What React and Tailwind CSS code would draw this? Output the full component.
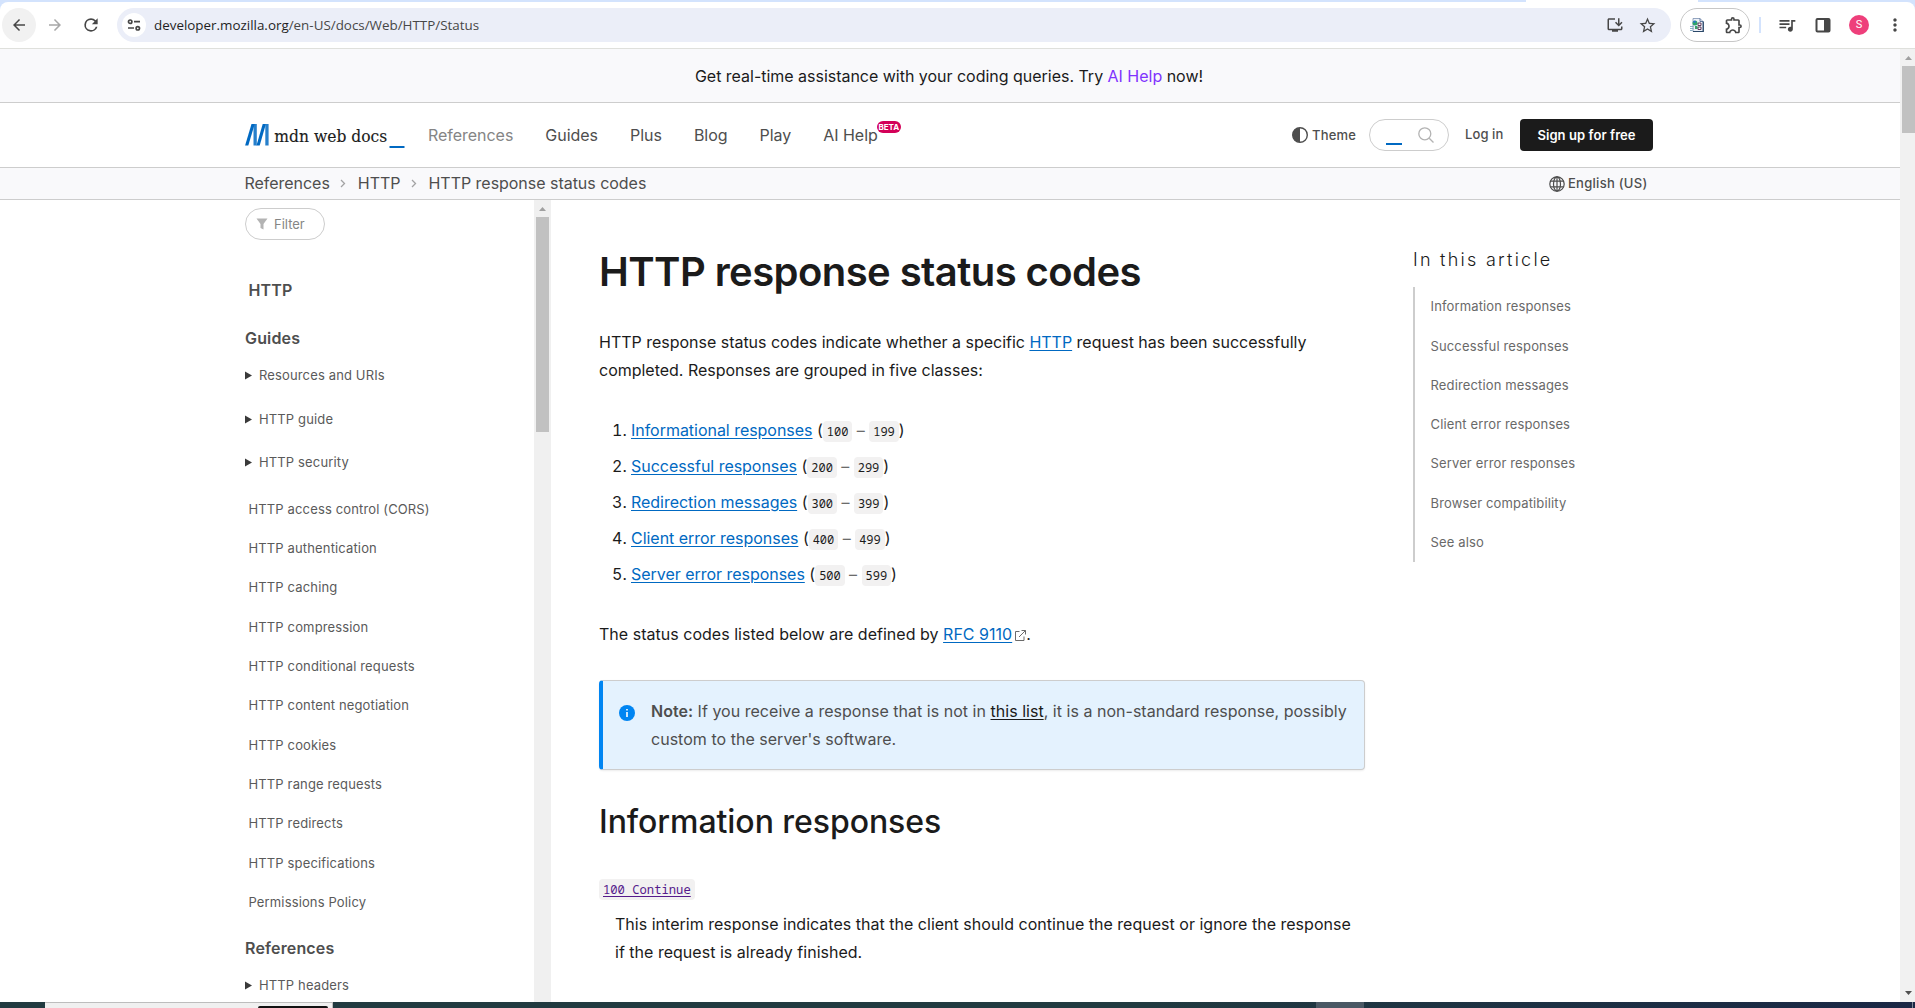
import React from "react";
import { MdInstallDesktop, MdStarBorder, MdOutlineExtension, MdQueueMusic, MdMoreVert } from "react-icons/md";

const guides = [
  "HTTP access control (CORS)",
  "HTTP authentication",
  "HTTP caching",
  "HTTP compression",
  "HTTP conditional requests",
  "HTTP content negotiation",
  "HTTP cookies",
  "HTTP range requests",
  "HTTP redirects",
  "HTTP specifications",
  "Permissions Policy",
];

const classes = [
  ["Informational responses", "100", "199"],
  ["Successful responses", "200", "299"],
  ["Redirection messages", "300", "399"],
  ["Client error responses", "400", "499"],
  ["Server error responses", "500", "599"],
];

const toc = [
  "Information responses",
  "Successful responses",
  "Redirection messages",
  "Client error responses",
  "Server error responses",
  "Browser compatibility",
  "See also",
];

function Code({ children }) {
  return (
    <code className="rounded bg-[#f2f1f1] px-1 py-0.5 font-['Noto_Sans_Mono','DejaVu_Sans_Mono',monospace] text-[12px] tracking-[-0.050px] text-[#1b1b1b]">
      {children}
    </code>
  );
}

function Link({ children }) {
  return <a className="text-[#0069c2] underline underline-offset-2">{children}</a>;
}

function BrowserBar() {
  return (
    <div className="flex h-[49px] shrink-0 flex-col border-b border-[#dfe0dc] bg-[#d3e3fd]">
      <div className="flex h-0.5 shrink-0">
        <div className="ml-[1526px] h-0.5 w-[172px] bg-white" />
      </div>
      <div className="flex flex-1 items-center rounded-t-lg bg-white text-[#474747]">
        <div className="ml-0.5 flex size-[34px] items-center justify-center rounded-full bg-[#f1f1f1]">
          <svg className="size-[18px]" viewBox="0 0 24 24" fill="currentColor"><path d="M20 11H7.830l5.590-5.590L12 4l-8 8 8 8 1.410-1.410L7.830 13H20z" /></svg>
        </div>
        <svg className="ml-[10px] size-[18px] text-[#a8a8a8]" viewBox="0 0 24 24" fill="currentColor"><path d="M4 13h12.170l-5.590 5.590L12 20l8-8-8-8-1.410 1.410L16.170 11H4z" /></svg>
        <svg className="ml-[17px] size-5" viewBox="0 0 24 24" fill="currentColor"><path d="M17.650 6.350A7.960 7.960 0 0 0 12 4a8 8 0 1 0 7.730 10h-2.080A6 6 0 1 1 12 6c1.660 0 3.140.690 4.220 1.780L13 11h7V4z" /></svg>
        <div className="ml-4 flex h-[34px] w-[1554px] items-center rounded-full bg-[#ebeef8]">
          <div className="ml-[5px] flex size-6 items-center justify-center rounded-full bg-white">
            <svg className="size-4" viewBox="0 0 16 16" fill="none" stroke="currentColor" strokeWidth="1.700"><circle cx="4.200" cy="4.700" r="1.700" /><path d="M8 4.700h6M2 11h6" /><circle cx="11.800" cy="11.300" r="1.700" /></svg>
          </div>
          <span className="ml-2 flex-1 font-['Open_Sans','Noto_Sans',sans-serif] text-[13.400px] text-[#474747]">
            <span className="text-[#1f1f1f]">developer.mozilla.org</span>/en-US/docs/Web/HTTP/Status
          </span>
          <MdInstallDesktop className="size-[18px]" />
          <MdStarBorder className="mr-[14px] ml-[14px] size-[19px]" />
        </div>
        <div className="ml-[9px] flex h-[34px] w-[70px] items-center rounded-full border border-[#c7c7c7]">
          <svg className="mr-0.5 ml-[9px] size-[14px]" viewBox="0 0 14 14">
            <path d="M3 .5h7l3 3v10H3z" fill="#eef2fa" stroke="#7b8fae" strokeWidth=".8" />
            <path d="M10 .5v3h3" fill="none" stroke="#3c5a88" strokeWidth=".8" />
            <path d="M13.300 3.500v10H3" stroke="#2b4868" fill="none" strokeWidth="1.200" />
            <circle cx="5" cy="5" r="2.500" fill="#2fa36b" />
            <path d="M3 4a2.500 2.500 0 0 1 3-1l-1 2z" fill="#2a6fd6" />
            <path d="M5 8h2.500v3H5z" fill="#3aa06b" />
            <path d="M8 5h3v2.500H8zM8 9h3v2.500H8z" fill="#fff" stroke="#502848" strokeWidth=".9" />
            <path d="M0 8.500h3.500M0 10.500h3.500M0 12.500h2.500" stroke="#6c9ab8" strokeWidth=".8" />
          </svg>
          <MdOutlineExtension className="ml-[18px] size-5" />
        </div>
        <div className="ml-[9px] h-4 w-0.5 bg-[#d3e3fd]" />
        <MdQueueMusic className="ml-[16px] size-5" />
        <svg className="ml-[18px] size-4" viewBox="0 0 16 16"><rect x="1.500" y="2" width="13" height="12.500" rx="1" fill="none" stroke="currentColor" strokeWidth="2" /><path d="M9 2h5.500v12.500H9z" fill="currentColor" /></svg>
        <div className="ml-[18px] flex size-5 items-center justify-center rounded-full bg-[#ee3f7b] font-['Roboto',sans-serif] text-[11px] text-white">S</div>
        <MdMoreVert className="ml-[16px] size-5" />
      </div>
    </div>
  );
}

function Header() {
  return (
    <header className="flex h-[65px] shrink-0 items-center border-b border-[#cdcdcd] pl-[245px] text-[#4e4e4e]">
      <svg className="h-[26px] w-[160px] shrink-0" viewBox="0 0 160 26">
        <g fill="#0069c2">
          <path d="M6.500 2h3.200L3.300 23.500H.100z" /><path d="M8.500 2h3.300v21.500H8.500z" opacity=".85" />
          <path d="M17.700 2h3.200l-6.200 21.500h-3.200z" /><path d="M20.300 2h3.300v21.500h-3.300z" opacity=".85" />
          <path d="M144.500 24h15v2h-15z" />
        </g>
        <text x="29.300" y="19.500" textLength="113" lengthAdjust="spacingAndGlyphs" fontFamily="'DejaVu Serif','Liberation Serif',serif" fontSize="17.500" fill="#1b1b1b" stroke="#1b1b1b" strokeWidth="0.150">mdn web docs</text>
      </svg>
      <nav className="ml-[23px] flex flex-1 gap-8 text-[16px] tracking-[-0.030px]">
        <span className="text-[#858585]">References</span>
        <span>Guides</span>
        <span>Plus</span>
        <span>Blog</span>
        <span>Play</span>
        <span className="relative">
          AI Help
          <span className="absolute top-[-2px] left-[calc(100%-1px)] flex h-3 w-6 items-center justify-center rounded-full bg-[#d30058] text-[8px] leading-none font-bold text-white">BETA</span>
        </span>
      </nav>
      <svg className="size-4" viewBox="0 0 16 16"><circle cx="8" cy="8" r="7.300" fill="none" stroke="currentColor" strokeWidth="1.400" /><path d="M8 .7a7.300 7.300 0 0 0 0 14.600z" fill="currentColor" /></svg>
      <span className="mt-0.5 ml-1 w-[45px] text-[13px] font-medium tracking-[0.200px]">Theme</span>
      <div className="ml-3 flex h-8 w-20 items-center rounded-full border border-[#cdcdcd]">
        <div className="mt-[18px] ml-4 h-0.5 w-4 bg-[#0069c2]" />
        <svg className="ml-4 size-4 text-[#b3b3b3]" viewBox="0 0 16 16" fill="none" stroke="currentColor" strokeWidth="1.300"><circle cx="6.800" cy="6.800" r="6" /><path d="M11.200 11.200l4.300 4.300" /></svg>
      </div>
      <span className="ml-4 w-[39px] text-[13px] font-medium tracking-[0.100px] whitespace-nowrap">Log in</span>
      <div className="mr-[247px] ml-4 flex h-8 w-[133px] items-center justify-center rounded bg-[#1b1b1b] pt-0.5 text-[13px] font-semibold tracking-[0.080px] text-white">Sign up for free</div>
    </header>
  );
}

function Chevron() {
  return <svg className="mx-[8.500px] mt-px size-[11px] text-[#a3a3a3]" viewBox="0 0 11 11" fill="none" stroke="currentColor" strokeWidth="1.300"><path d="M3 2l3.500 3.500L3 9" /></svg>;
}

function Breadcrumbs() {
  return (
    <div className="flex h-8 shrink-0 items-center border-b border-[#cdcdcd] bg-[#f9f9fb] pb-px pl-[244.500px] text-[16px] tracking-[-0.030px] text-[#4e4e4e]">
      <span>References</span><Chevron /><span>HTTP</span><Chevron /><span className="flex-1">HTTP response status codes</span>
      <svg className="mt-px size-4" viewBox="0 0 16 16" fill="none" stroke="currentColor" strokeWidth="1.200"><circle cx="8" cy="8" r="7.200" /><ellipse cx="8" cy="8" rx="3.500" ry="7.200" /><path d="M8 .8v14.400M1.500 5.200h13M1.500 10.800h13" /></svg>
      <span className="mt-px mr-[252px] ml-[3px] w-20 text-[13px] font-medium tracking-[0.280px] whitespace-nowrap">English (US)</span>
    </div>
  );
}

function Summary({ children }) {
  return (
    <div className="flex h-[43.500px] items-center text-[13px] tracking-[0.140px]">
      <svg className="mr-[7px] h-[9px] w-[7px]" viewBox="0 0 7 9" fill="#3a3a3a"><path d="M0 .5v8l7-4z" /></svg>
      {children}
    </div>
  );
}

function Sidebar() {
  return (
    <aside className="flex w-[289px] shrink-0 flex-col overflow-hidden pt-2 text-[#5a5a5a]">
      <div className="flex h-8 w-20 shrink-0 items-center rounded-full border border-[#cdcdcd] text-[13px] text-[#858585]">
        <svg className="ml-[10px] size-3 text-[#b3b3b3]" viewBox="0 0 12 12" fill="currentColor"><path d="M.5.500h11L7.500 6v5.500l-3-1.500V6z" /></svg>
        <span className="mt-0.5 ml-[6px]">Filter</span>
      </div>
      <div className="mt-[38px] ml-[3.500px] h-6 shrink-0 text-[16px] font-semibold tracking-[0.120px] text-[#4e4e4e]">HTTP</div>
      <div className="mt-6 h-6 shrink-0 text-[16px] font-semibold tracking-[0.160px] text-[#4e4e4e]">Guides</div>
      <div className="mt-[4px] shrink-0">
        <Summary>Resources and URIs</Summary>
        <Summary>HTTP guide</Summary>
        <Summary>HTTP security</Summary>
      </div>
      <ul className="mt-[5.500px] ml-[3.500px] shrink-0">
        {guides.map((g) => <li key={g} className="flex h-[39.300px] items-center text-[13px] tracking-[0.140px]">{g}</li>)}
      </ul>
      <div className="mt-[13.500px] h-6 shrink-0 text-[16px] font-semibold tracking-[0.160px] text-[#4e4e4e]">References</div>
      <div className="mt-[4px] shrink-0"><Summary>HTTP headers</Summary></div>
    </aside>
  );
}

function Article() {
  return (
    <main className="ml-12 w-[766px] shrink-0 text-[16px] leading-7 text-[#1b1b1b]">
      <h1 className="mt-12 h-12 text-[40px] leading-[48px] font-[560] tracking-[-0.570px] whitespace-nowrap">HTTP response status codes</h1>
      <p className="mt-8 tracking-[-0.015px]">HTTP response status codes indicate whether a specific <Link>HTTP</Link> request has been successfully<br />completed. Responses are grouped in five classes:</p>
      <ol className="mt-8 list-decimal pl-8">
        {classes.map(([name, from, to]) => (
          <li key={from} className="h-9 leading-7"><span className="tracking-[-0.030px]"><Link>{name}</Link></span> (<Code>{from}</Code> <span className="text-[#6b6b6b]">–</span> <Code>{to}</Code>)</li>
        ))}
      </ol>
      <p className="mt-[24px] tracking-[0.020px]">
        The status codes listed below are defined by <Link>RFC 9110</Link>
        <svg className="ml-[3px] inline size-[11px] align-[-1px] text-[#6b6b6b]" viewBox="0 0 11 11" fill="none" stroke="currentColor"><path d="M4.500 1.500h-4v9h8.500V6.500M6.500.5h4v4M10.500.5L4 7" /></svg>.
      </p>
      <div className="mt-[32px] flex h-[90px] rounded border border-l-4 border-[#cdcdcd] border-l-[#0085f2] bg-[#e4f2fe] pt-[16px] text-[#4e4e4e] shadow-[0_1px_2px_rgba(0,0,0,0.080)]">
        <svg className="mt-2 ml-4 size-4 shrink-0" viewBox="0 0 16 16"><circle cx="8" cy="8" r="8" fill="#0085f2" /><path d="M7.200 4h1.600v1.600H7.200zM7.200 7h1.600v5H7.200z" fill="#fff" /></svg>
        <p className="ml-4 tracking-[0.025px] whitespace-nowrap"><b className="font-semibold">Note:</b> If you receive a response that is not in <a className="text-[#1b1b1b] underline underline-offset-2">this list</a>, it is a non-standard response, possibly<br />custom to the server's software.</p>
      </div>
      <h2 className="mt-8 h-10 text-[32px] leading-10 font-medium tracking-[-0.060px]">Information responses</h2>
      <div className="mt-[32px] h-7 text-[#551a8b]"><code className="rounded bg-[#f2f1f1] px-1 py-0.5 font-['Noto_Sans_Mono','DejaVu_Sans_Mono',monospace] text-[12.200px] underline underline-offset-2">100 Continue</code></div>
      <p className="mt-[8px] ml-4 tracking-[0.015px] whitespace-nowrap">This interim response indicates that the client should continue the request or ignore the response<br />if the request is already finished.</p>
    </main>
  );
}

function Toc() {
  return (
    <aside className="ml-12 shrink-0 pt-12">
      <div className="h-[39px] text-[18px] leading-6 font-light tracking-[2.250px] text-[#1b1b1b]">In this article</div>
      <ul className="h-[275px] border-l-2 border-[#cdcdcd] pt-[0.400px] pl-[15.500px] text-[13px] tracking-[0.140px] text-[#696969]">
        {toc.map((t) => <li key={t} className="flex h-[39.300px] items-center">{t}</li>)}
      </ul>
    </aside>
  );
}

export default function App() {
  return (
    <div className="flex h-[1008px] w-[1915px] flex-col overflow-hidden bg-white font-['Inter',sans-serif]">
      <BrowserBar />
      <div className="flex min-h-0 flex-1">
        <div className="flex w-[1900px] flex-col overflow-hidden">
          <div className="flex h-[54px] shrink-0 items-center justify-center border-b border-[#cdcdcd] bg-[#f9f9fb] pt-px pr-[2px] text-[16px] tracking-[-0.020px] text-[#1b1b1b]">
            <span>Get real-time assistance with your coding queries. Try <span className="text-[#8033fe]">AI Help</span> now!</span>
          </div>
          <Header />
          <Breadcrumbs />
          <div className="flex min-h-0 flex-1 overflow-hidden pl-[245px]">
            <Sidebar />
            <div className="flex w-[17px] shrink-0 flex-col items-center bg-[#f0f0f0]">
              <svg className="mt-[7px] h-1 w-[7px]" viewBox="0 0 7 4" fill="#a0a0a0"><path d="M0 4L3.500 0 7 4z" /></svg>
              <div className="mt-[6px] h-[215px] w-[13px] bg-[#c1c1c1]" />
            </div>
            <Article />
            <Toc />
          </div>
        </div>
        <div className="flex w-[15px] flex-col items-end bg-[#f1f1f1]">
          <svg className="mt-[7px] mr-[3px] h-1 w-[7px]" viewBox="0 0 7 4" fill="#a0a0a0"><path d="M0 4L3.500 0 7 4z" /></svg>
          <div className="mt-[6px] h-[67px] w-[13px] bg-[#c1c1c1]" />
          <svg className="mt-auto mr-[3px] mb-[7px] h-1 w-[7px]" viewBox="0 0 7 4" fill="#505050"><path d="M0 0h7L3.500 4z" /></svg>
        </div>
      </div>
      <div className="flex h-1.5 shrink-0 bg-linear-to-r from-[#213a40] from-60% to-[#1a2745]">
        <div className="ml-[45px] h-full w-[288px] border-t border-r border-[#bdbdbd] bg-[#f0f0f0] pt-[3px] pl-[213px]">
          <div className="h-0.5 w-[70px] rounded-t bg-[#111]" />
        </div>
        <div className="ml-[983px] h-full w-12 bg-[#4a5864]" />
        <div className="mr-0.5 ml-auto h-full w-px bg-[#7d8795]" />
      </div>
    </div>
  );
}
